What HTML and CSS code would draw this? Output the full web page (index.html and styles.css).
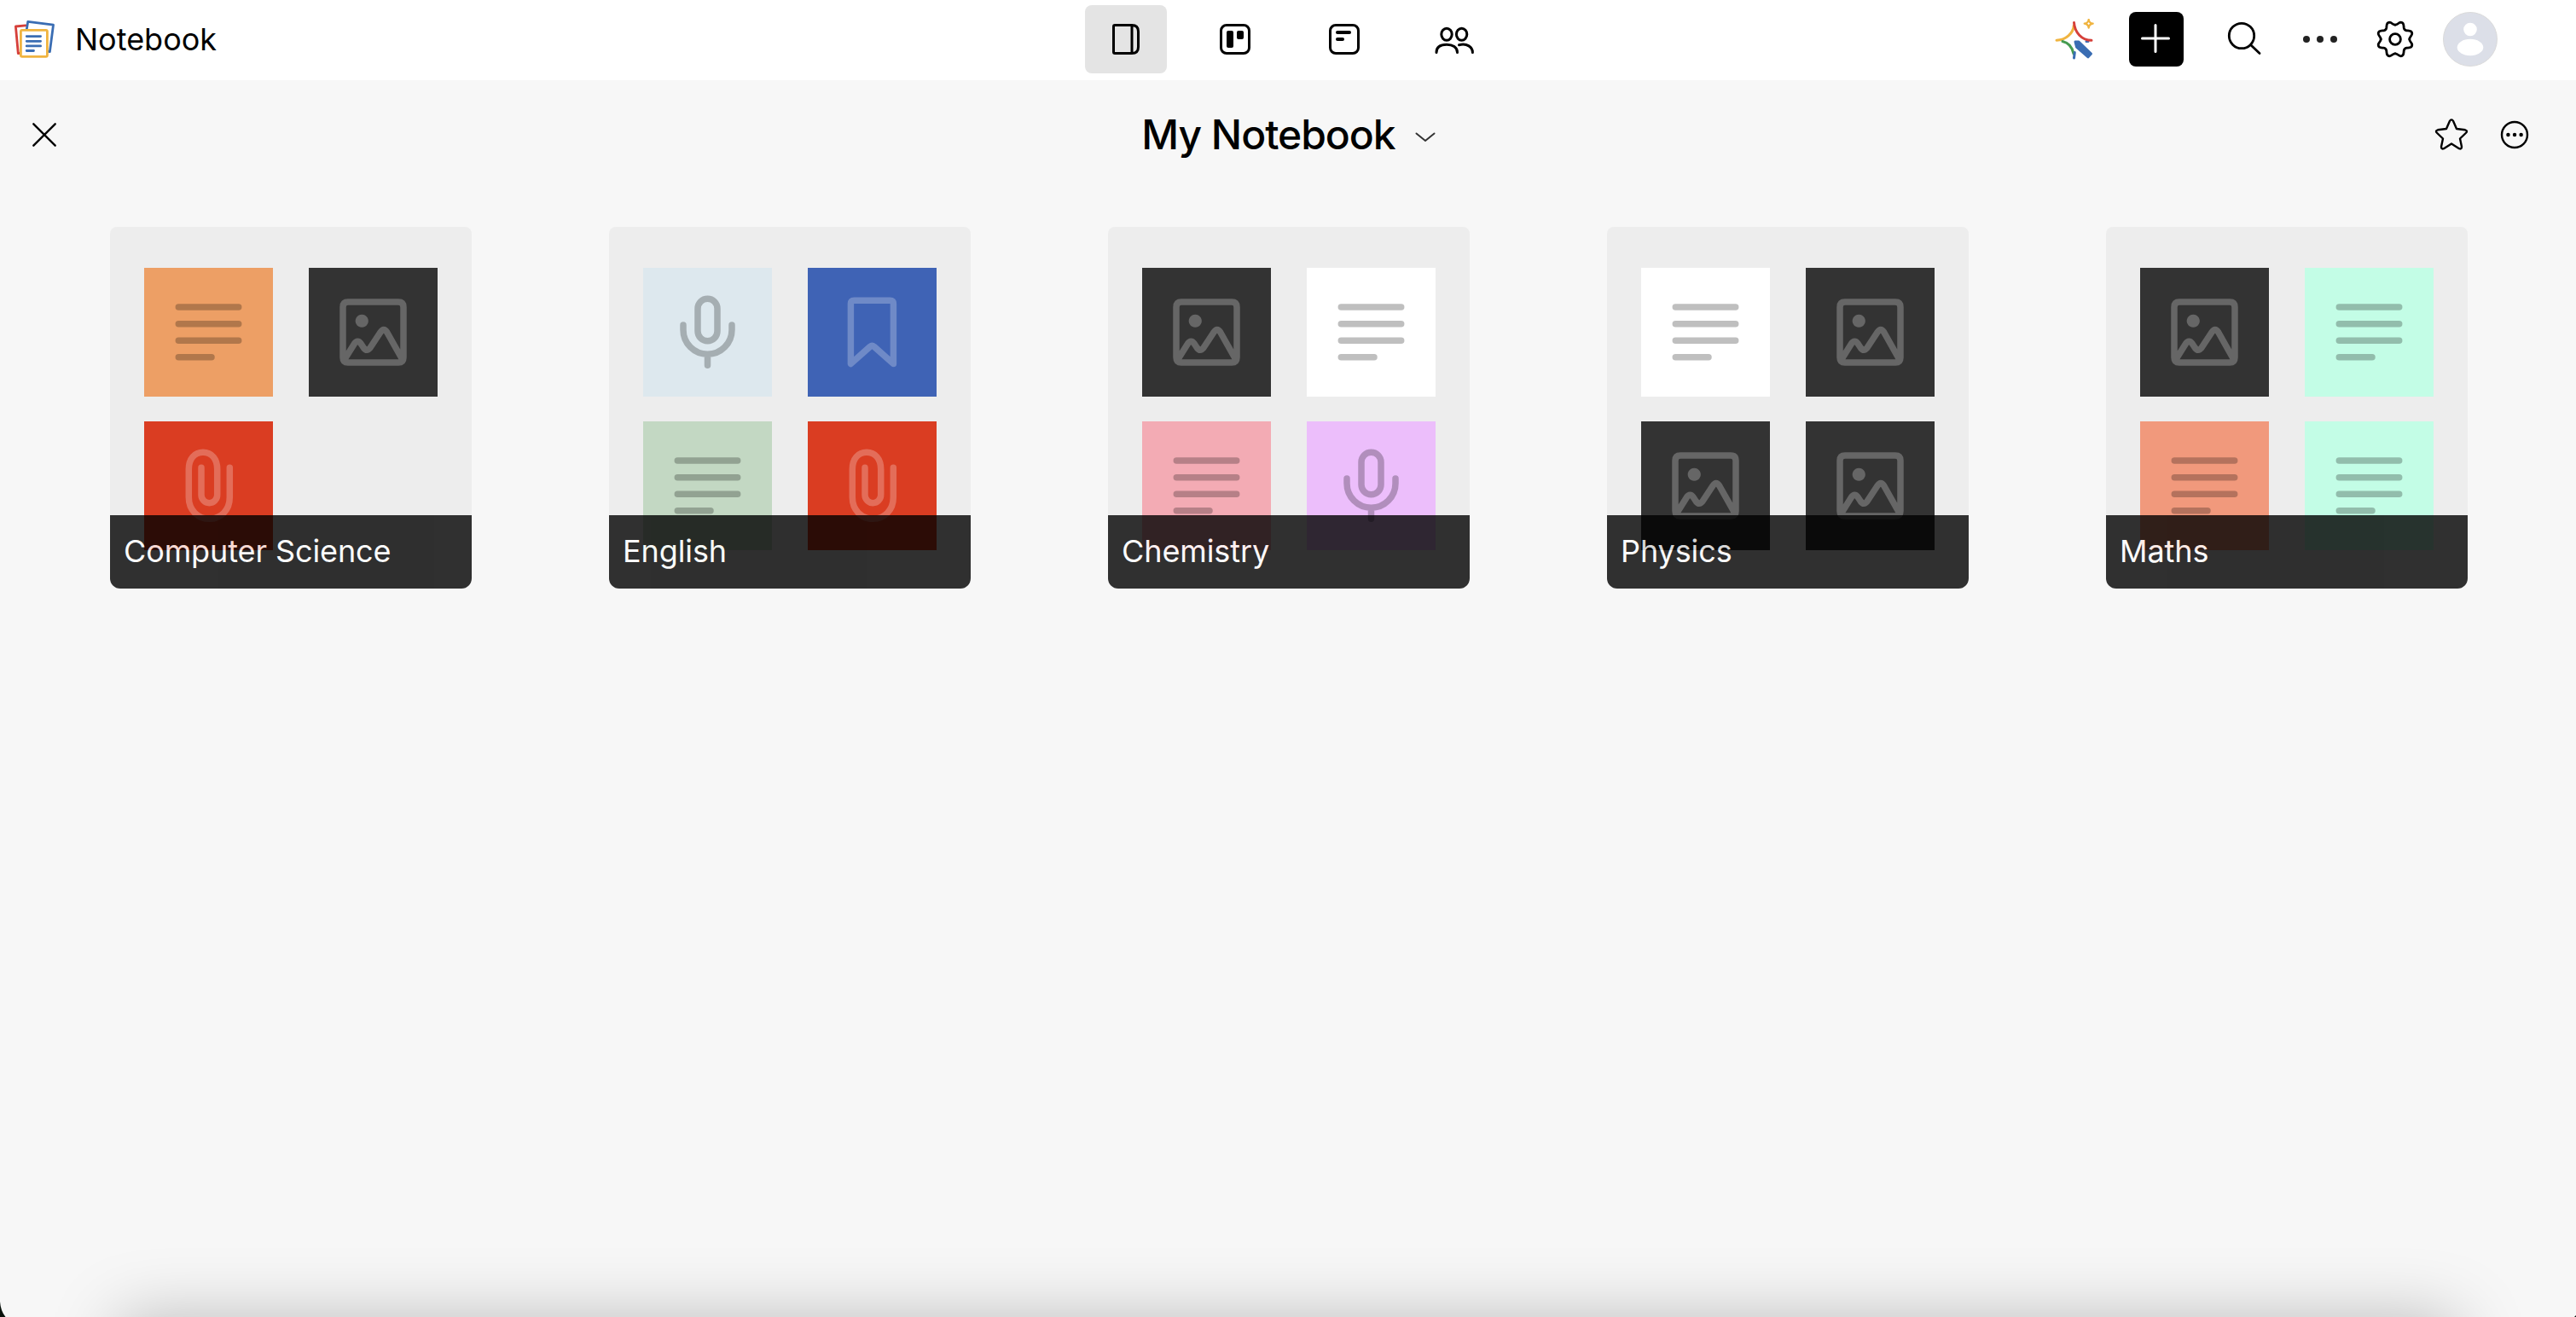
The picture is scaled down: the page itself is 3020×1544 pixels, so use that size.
FILE: index.html
```html
<!DOCTYPE html>
<html lang="en">
<head>
    <meta charset="UTF-8">
    <meta name="viewport" content="width=device-width, initial-scale=1.0">
    <title>My Notebook</title>
    <link rel="stylesheet" href="styles.css">
</head>
<body>
    <!-- note type icons -->
    <svg class="icon-defs">
        <symbol id="text" viewBox="0 0 151 151">
            <path d="M40.3 46H110.7M40.3 65.7H110.7M40.3 85.2H110.7M40.3 104.7H79"/>
        </symbol>
        <symbol id="image" viewBox="0 0 151 151">
            <path d="M46 39.9H105Q111 39.9 111 45.9V105Q111 111 105 111H46Q40 111 40 105V45.9Q40 39.9 46 39.9ZM41.5 108L53.3 89.2Q57.3 83.5 61.2 89L64.5 94Q68.2 98.5 71.8 94L84 75.5Q88 69.5 91.7 75.5L110 108M62.3 58.5A3.8 3.8 0 1 1 62.2 58.5Z"/>
        </symbol>
        <symbol id="clip" viewBox="0 0 151 151">
            <path d="M100.3 54.3V89C100.3 104 90 114.3 76.5 114.3S52.3 104 52.3 89V56C52.3 44 59 36.3 69 36.3S85.7 44 85.7 56V86.3A9.35 9.35 0 0 1 67 86.3V54.3"/>
        </symbol>
        <symbol id="mic" viewBox="0 0 151 151">
            <path d="M64 47.8A11.5 11.5 0 0 1 87 47.8V74.2A11.5 11.5 0 0 1 64 74.2ZM47 67V72.8A28.5 28.5 0 0 0 104 72.8V67M75.5 102V114.3"/>
        </symbol>
        <symbol id="bookmark" viewBox="0 0 151 151">
            <path d="M50.4 112.5V42.3Q50.4 38.3 54.4 38.3H96.4Q100.4 38.3 100.4 42.3V112.5L77.8 92.4Q75.4 90.5 73 92.4Z"/>
        </symbol>
    </svg>

    <header class="header">
        <div class="brand">
            <svg width="48" height="48" viewBox="0 0 48 48" fill="none" stroke-width="2.8" stroke-linejoin="round" stroke-linecap="round">
                <path d="M14 7.8L2.4 9L5.3 40.5L9 40.3" stroke="#d6403a"/>
                <path d="M15.2 13L16.7 3.4L46.5 7.2L42.4 38.6L40.5 38.3" stroke="#3a6db3"/>
                <rect x="8.4" y="13.3" width="31" height="31" rx="1.5" fill="#fff" stroke="#f0b440"/>
                <path d="M15.2 20.6H31.6M15.2 26.3H31.6M15.2 31.9H31.6M15.2 37.5H23.5" stroke="#3a6db3"/>
            </svg>
            <span class="brand-name">Notebook</span>
        </div>
        <nav class="tabs">
            <a class="tab active">
                <svg width="48" height="48" viewBox="0 0 48 48">
                    <path d="M11 7.5H31Q38.5 7.5 38.5 15V33Q38.5 40.5 31 40.5H11Q9.5 40.5 9.5 39V9Q9.5 7.5 11 7.5ZM31 7.5V40.5"/>
                </svg>
            </a>
            <a class="tab">
                <svg width="48" height="48" viewBox="0 0 48 48">
                    <rect x="7.5" y="7.5" width="33" height="33" rx="6.5"/>
                    <rect class="solid" x="14" y="14" width="8" height="20" rx="2"/>
                    <rect class="solid" x="26" y="14" width="8" height="10" rx="2"/>
                </svg>
            </a>
            <a class="tab">
                <svg width="48" height="48" viewBox="0 0 48 48">
                    <rect x="7.5" y="7.5" width="33" height="33" rx="6.5"/>
                    <rect class="solid" x="14" y="14" width="18" height="4" rx="2"/>
                    <rect class="solid" x="14" y="22" width="10" height="4" rx="2"/>
                </svg>
            </a>
            <a class="tab">
                <svg width="48" height="48" viewBox="0 0 48 48">
                    <ellipse cx="16" cy="18.3" rx="6.2" ry="7"/>
                    <ellipse cx="33.6" cy="18.3" rx="6.2" ry="7"/>
                    <path d="M4 39.5C4 33 9 30.2 16 30.2S28.5 33.5 28.5 39.5M30.5 30.7C40 28.5 46.4 33 46.4 39.5"/>
                </svg>
            </a>
        </nav>
        <div class="tools">
            <svg class="spark" width="48" height="48" viewBox="0 0 48 48" fill="none" stroke-width="3" stroke-linecap="round">
                <path d="M3 25.3C14 25 22.5 17 23.3 8" stroke="#f0b440"/>
                <path d="M10 26.5C17 28 21.5 34 23 41" stroke="#459b50"/>
                <path d="M24.3 39.5L23.5 46M38 26.5H40" stroke="#3a6db3"/>
                <path d="M23.5 4.5C24.3 16 32.5 25.3 44 25.3" stroke="#d6403a"/>
                <path d="M25 27L29 27L43.5 41L40 44.8L26.5 33Z" fill="#3a6db3" stroke="#3a6db3" stroke-linejoin="round"/>
                <path d="M40.7 .8Q41.2 5.2 45.7 5.7Q41.2 6.2 40.7 10.7Q40.2 6.2 35.7 5.7Q40.2 5.2 40.7 .8Z" stroke="#f0b440" stroke-width="2.2" stroke-linejoin="round"/>
            </svg>
            <a class="add">
                <svg width="64" height="64" viewBox="0 0 64 64"><path d="M15.5 31H46.5M31 15.5V46.5"/></svg>
            </a>
            <svg class="line" width="48" height="48" viewBox="0 0 48 48">
                <circle cx="20" cy="20" r="14.7"/>
                <path d="M31 31L41 40.5"/>
            </svg>
            <svg class="dots" width="48" height="48" viewBox="0 0 48 48">
                <circle cx="8" cy="24" r="4"/><circle cx="24" cy="24" r="4"/><circle cx="40" cy="24" r="4"/>
            </svg>
            <svg class="line gear" width="48" height="48" viewBox="-24 -24 48 48">
                <circle r="6.4"/>
                <path id="tooth" d="M0 -16.8C3.2 -16.8 3.5 -19.7 6.7 -19.8C10.4 -19.7 9.9 -16.5 10.2 -13.5Q10.6 -10.6 13.5 -10.2C16.5 -9.9 19.7 -10.4 19.8 -6.7C19.7 -3.5 16.8 -3.2 16.8 0"/>
                <use href="#tooth" transform="rotate(90)"/>
                <use href="#tooth" transform="rotate(180)"/>
                <use href="#tooth" transform="rotate(270)"/>
            </svg>
            <svg class="avatar" width="64" height="64" viewBox="0 0 64 64">
                <circle cx="32" cy="32" r="31.5" fill="#dcdfe8" stroke="#dadada"/>
                <circle cx="32" cy="20.5" r="7.8" fill="#fff"/>
                <ellipse cx="32" cy="41.5" rx="15.3" ry="9.7" fill="#fff"/>
            </svg>
        </div>
    </header>

    <div class="title-bar">
        <svg class="close" width="32" height="32" viewBox="0 0 32 32"><path d="M3.3 3.3L28.7 28.7M28.7 3.3L3.3 28.7"/></svg>
        <div class="title">
            <h1>My Notebook</h1>
            <svg width="24" height="24" viewBox="0 0 24 24"><path d="M1.5 10.5L12 19L22.5 10.5"/></svg>
        </div>
        <div class="title-actions">
            <svg width="40" height="40" viewBox="0 0 40 40">
                <path d="M17.8 4.2Q20 .6 22.2 4.2L26 13L36 14.3Q39.6 15.3 36.8 18L30 24.5L32 34Q32 37.2 29 36.2L20 30.5L11 36.2Q8 37.2 8 34L10 24.5L3.2 18Q.4 15.3 4 14.3L14 13Z"/>
            </svg>
            <svg width="36" height="36" viewBox="0 0 36 36">
                <circle cx="18" cy="18" r="15"/>
                <path class="points" d="M10.4 18H10.5M18 18H18.1M25.6 18H25.7"/>
            </svg>
        </div>
    </div>

    <main class="notebooks">
        <div class="notebook">
            <div class="notes">
                <svg class="note orange"><use href="#text"/></svg>
                <svg class="note dark"><use href="#image"/></svg>
                <svg class="note red"><use href="#clip"/></svg>
            </div>
            <div class="name">Computer Science</div>
        </div>
        <div class="notebook">
            <div class="notes">
                <svg class="note ice"><use href="#mic"/></svg>
                <svg class="note blue"><use href="#bookmark"/></svg>
                <svg class="note green"><use href="#text"/></svg>
                <svg class="note red"><use href="#clip"/></svg>
            </div>
            <div class="name">English</div>
        </div>
        <div class="notebook">
            <div class="notes">
                <svg class="note dark"><use href="#image"/></svg>
                <svg class="note white"><use href="#text"/></svg>
                <svg class="note pink"><use href="#text"/></svg>
                <svg class="note purple"><use href="#mic"/></svg>
            </div>
            <div class="name">Chemistry</div>
        </div>
        <div class="notebook">
            <div class="notes">
                <svg class="note white"><use href="#text"/></svg>
                <svg class="note dark"><use href="#image"/></svg>
                <svg class="note dark"><use href="#image"/></svg>
                <svg class="note dark"><use href="#image"/></svg>
            </div>
            <div class="name">Physics</div>
        </div>
        <div class="notebook">
            <div class="notes">
                <svg class="note dark"><use href="#image"/></svg>
                <svg class="note mint"><use href="#text"/></svg>
                <svg class="note salmon"><use href="#text"/></svg>
                <svg class="note mint"><use href="#text"/></svg>
            </div>
            <div class="name">Maths</div>
        </div>
    </main>

    <div class="bottom-shadow"></div>
    <svg class="corner" width="8" height="18" viewBox="0 0 8 18"><path d="M0 0Q.8 11 6.5 18H0Z"/></svg>
    <svg class="corner right" width="2" height="2" viewBox="0 0 2 2"><path d="M2 0V2H0Z"/></svg>
</body>
</html>
```

FILE: styles.css
```css
* {
    box-sizing: border-box;
}
body {
    margin: 0;
    height: 1544px;
    background-color: #f7f7f7;
    font-family: Inter, "Liberation Sans", sans-serif;
    color: #000;
    position: relative;
    overflow: hidden;
}
svg {
    display: block;
    flex: none;
}
.icon-defs {
    position: absolute;
    width: 0;
    height: 0;
}

/* top bar */
.header {
    display: grid;
    grid-template-columns: 1fr auto 1fr;
    align-items: center;
    height: 94px;
    padding: 0 0 2px 4px;
    background-color: #fff;
}
.brand {
    display: flex;
    align-items: center;
    gap: 24px;
    padding-left: 12px;
}
.brand-name {
    font-size: 36px;
    line-height: 44px;
}
.tabs {
    display: flex;
    gap: 32px;
}
.tab {
    display: flex;
    align-items: center;
    justify-content: center;
    width: 96px;
    height: 80px;
    border-radius: 8px;
}
.tab.active {
    background-color: #e4e4e4;
}
.tab svg {
    fill: none;
    stroke: #000;
    stroke-width: 3;
    stroke-linecap: round;
}
.tab .solid {
    fill: #000;
    stroke: none;
}
.tools {
    display: flex;
    align-items: center;
    justify-content: flex-end;
    gap: 40px;
    padding-right: 92px;
}
.add {
    width: 64px;
    height: 64px;
    margin-right: 8px;
    border-radius: 8px;
    background-color: #000;
}
.add svg {
    stroke: #fff;
    stroke-width: 3;
    stroke-linecap: round;
}
.line {
    fill: none;
    stroke: #000;
    stroke-width: 2.8;
    stroke-linecap: round;
}
.dots {
    fill: #222;
}
.avatar {
    margin-left: -8px;
}

/* notebook title */
.title-bar {
    display: grid;
    grid-template-columns: 1fr auto 1fr;
    align-items: center;
    height: 128px;
    padding: 0 54px 0 36px;
}
.title-bar svg {
    fill: none;
    stroke: #000;
    stroke-width: 2.4;
    stroke-linecap: round;
    stroke-linejoin: round;
}
.title {
    display: flex;
    align-items: center;
    gap: 23px;
    margin-left: 19px;
}
.title h1 {
    margin: 0;
    font-size: 48px;
    line-height: 60px;
    font-weight: 500;
    letter-spacing: -1px;
}
.title svg {
    stroke: #333;
    stroke-width: 2;
}
.title-actions {
    display: flex;
    align-items: center;
    justify-content: flex-end;
    gap: 36px;
}
.title-actions .points {
    stroke-width: 4.4;
}

/* notebook cards */
.notebooks {
    display: flex;
    gap: 161px;
    padding: 44px 0 0 129px;
}
.notebook {
    position: relative;
    flex: none;
    width: 424px;
    height: 424px;
    border-radius: 8px 8px 12px 12px;
    background-color: #ededed;
    overflow: hidden;
}
.notes {
    display: grid;
    grid-template-columns: 151px 151px;
    gap: 29px 42px;
    padding: 48px 40px 0;
}
.note {
    width: 151px;
    height: 151px;
    fill: none;
    stroke: rgba(0, 0, 0, 0.25);
    stroke-width: 7.5;
    stroke-linecap: round;
    stroke-linejoin: round;
}
.name {
    position: absolute;
    left: 0;
    bottom: 0;
    width: 100%;
    height: 86px;
    padding-left: 16px;
    background-color: #000;
    color: #fff;
    opacity: 0.8;
    font-size: 36px;
    line-height: 84px;
    letter-spacing: -0.1px;
}
.dark,
.red,
.blue {
    stroke: rgba(255, 255, 255, 0.25);
}
.dark {
    background-color: #333;
}
.red {
    background-color: #da3d22;
}
.blue {
    background-color: #3f63b5;
}
.orange {
    background-color: #ed9f65;
}
.ice {
    background-color: #dde8ee;
}
.green {
    background-color: #c3d8c3;
}
.white {
    background-color: #fff;
}
.pink {
    background-color: #f3abb4;
}
.purple {
    background-color: #ecbefb;
}
.salmon {
    background-color: #f1997c;
}
.mint {
    background-color: #c3fde6;
}

/* window edge */
.bottom-shadow {
    position: absolute;
    left: 200px;
    right: 200px;
    bottom: 0;
    height: 0;
    box-shadow: 0 62px 80px 60px rgba(0, 0, 0, 0.25);
}
.corner {
    position: absolute;
    left: 0;
    bottom: 0;
    fill: #0a120c;
}
.corner.right {
    left: auto;
    right: 0;
}
```
